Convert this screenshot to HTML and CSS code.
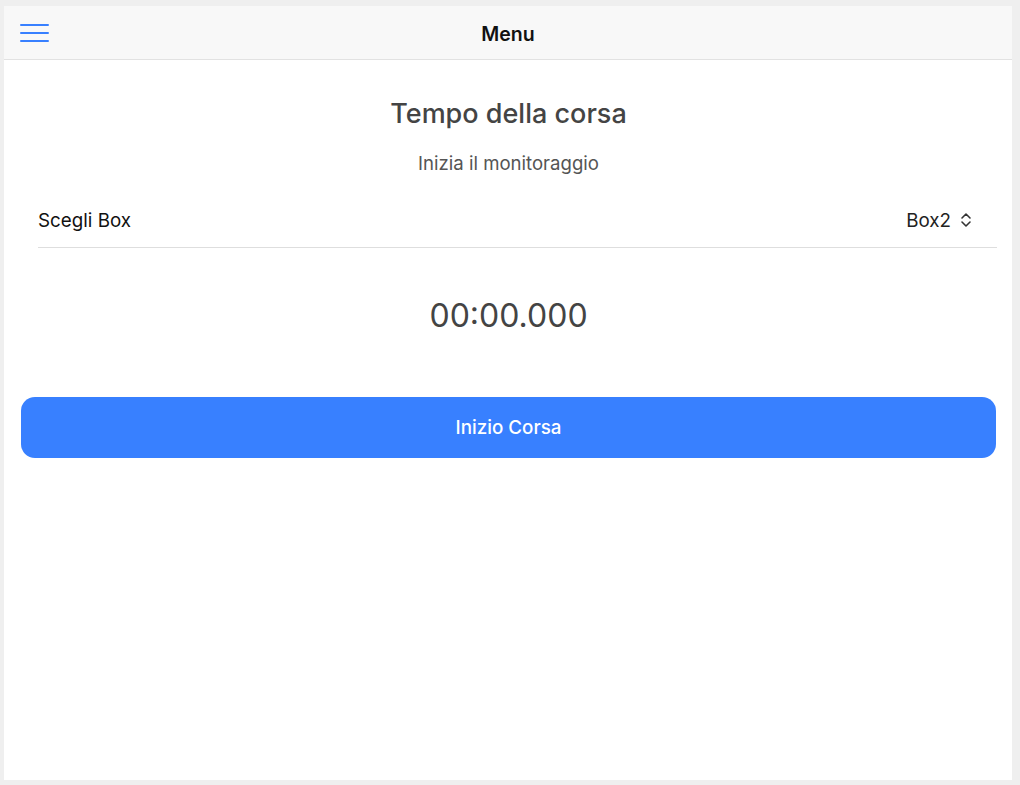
FILE: index.html
```html
<!DOCTYPE html>
<html lang="it">
<head>
<meta charset="utf-8">
<title>Menu</title>
<link rel="stylesheet" href="styles.css">
</head>
<body>
<div class="screen">
  <header class="toolbar">
    <button class="menu-btn" aria-label="Menu">
      <svg width="30" height="18" viewBox="0 0 30 18"><path d="M1 1h27M1 9h27M1 17h27" stroke="#3880ff" stroke-width="2" stroke-linecap="round" fill="none"/></svg>
    </button>
    <h1 class="toolbar-title">Menu</h1>
  </header>
  <main class="content">
    <h2 class="title">Tempo della corsa</h2>
    <p class="subtitle">Inizia il monitoraggio</p>
    <div class="select-row">
      <span class="select-label">Scegli Box</span>
      <span class="select-value">Box2
        <svg class="updown" width="14" height="16" viewBox="0 0 14 16"><path d="M3 6l4-4 4 4M3 10l4 4 4-4" stroke="#333" stroke-width="1.6" fill="none" stroke-linecap="round" stroke-linejoin="round"/></svg>
      </span>
    </div>
    <div class="timer">00:00.000</div>
    <button class="start-btn">Inizio Corsa</button>
  </main>
</div>
</body>
</html>
```

FILE: styles.css
```css
html, body {
  margin: 0;
  padding: 0;
  height: 100%;
}
body {
  background: #efefef;
  font-family: Inter, "Liberation Sans", Arial, sans-serif;
  padding: 6px 8px 5px 4px;
  box-sizing: border-box;
}
.screen {
  background: #fff;
  height: 774px;
  display: flex;
  flex-direction: column;
}
.toolbar {
  height: 54px;
  background: #f8f8f8;
  border-bottom: 1px solid #e2e2e2;
  display: flex;
  align-items: center;
  position: relative;
  box-sizing: border-box;
}
.menu-btn {
  background: none;
  border: 0;
  padding: 0;
  margin-left: 16px;
  margin-top: 1px;
  display: flex;
}
.toolbar-title {
  position: absolute;
  left: 0;
  right: 0;
  text-align: center;
  margin: 0;
  padding-top: 2px;
  font-size: 19.5px;
  font-weight: 600;
  color: #111;
  pointer-events: none;
}
.content {
  display: flex;
  flex-direction: column;
  padding: 0 16px 0 17px;
}
.title {
  margin: 36px 0 0;
  text-align: center;
  font-size: 27px;
  font-weight: 500;
  color: #444;
  line-height: 36px;
}
.subtitle {
  margin: 19px 0 0;
  text-align: center;
  font-size: 18.6px;
  color: #555;
  line-height: 24px;
}
.select-row {
  margin: 21px -1px 0 17px;
  height: 52px;
  border-bottom: 1px solid #dedede;
  display: flex;
  align-items: center;
  justify-content: space-between;
  box-sizing: border-box;
  padding-bottom: 3px;
}
.select-label {
  font-size: 18.8px;
  color: #111;
}
.select-value {
  font-size: 18.8px;
  color: #222;
  display: flex;
  align-items: center;
  gap: 8px;
  padding-right: 24px;
}
.timer {
  text-align: center;
  font-size: 32px;
  color: #444;
  margin-top: 48px;
  line-height: 40px;
}
.start-btn {
  margin-top: 61px;
  height: 61px;
  border: 0;
  border-radius: 14px;
  background: #3880ff;
  color: #fff;
  font-family: inherit;
  font-size: 18.8px;
  font-weight: 500;
}
```
